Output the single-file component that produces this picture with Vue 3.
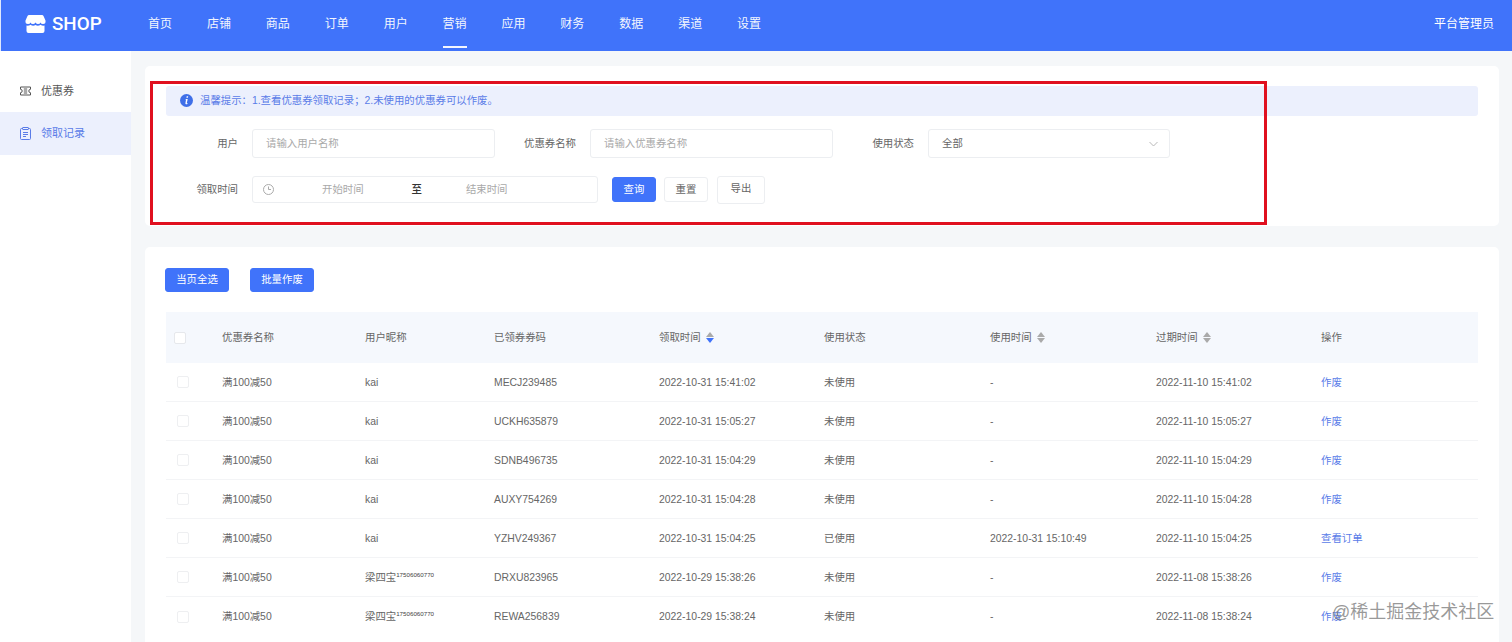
<script setup>
const navItems = ['首页', '店铺', '商品', '订单', '用户', '营销', '应用', '财务', '数据', '渠道', '设置']

const phone = '17506060770'
const rows = [
  { code: 'MECJ239485', got: '2022-10-31 15:41:02', state: '未使用', used: '-', exp: '2022-11-10 15:41:02', op: '作废', user: 'kai' },
  { code: 'UCKH635879', got: '2022-10-31 15:05:27', state: '未使用', used: '-', exp: '2022-11-10 15:05:27', op: '作废', user: 'kai' },
  { code: 'SDNB496735', got: '2022-10-31 15:04:29', state: '未使用', used: '-', exp: '2022-11-10 15:04:29', op: '作废', user: 'kai' },
  { code: 'AUXY754269', got: '2022-10-31 15:04:28', state: '未使用', used: '-', exp: '2022-11-10 15:04:28', op: '作废', user: 'kai' },
  { code: 'YZHV249367', got: '2022-10-31 15:04:25', state: '已使用', used: '2022-10-31 15:10:49', exp: '2022-11-10 15:04:25', op: '查看订单', user: 'kai' },
  { code: 'DRXU823965', got: '2022-10-29 15:38:26', state: '未使用', used: '-', exp: '2022-11-08 15:38:26', op: '作废', user: '梁四宝', sup: phone },
  { code: 'REWA256839', got: '2022-10-29 15:38:24', state: '未使用', used: '-', exp: '2022-11-08 15:38:24', op: '作废', user: '梁四宝', sup: phone },
]
</script>

<template>
  <div class="page">
    <header class="topbar">
      <div class="brand">
        <svg class="brand-icon" width="21" height="18" viewBox="0 0 21 18">
          <path fill="#fff" d="M4 0H17Q18 0 18.500 1L20.500 5.500Q21 9 18 9Q16 9 15.500 7.500Q15 9 13 9Q11.500 9 10.500 7.500Q9.500 9 8 9Q6 9 5.500 7.500Q5 9 3 9Q0 9 .5 5.500L2.500 1Q3 0 4 0Z"/>
          <path fill="#fff" d="M1.500 10.500Q3.500 11 5.500 9.800Q8 11.500 10.500 10Q13 11.500 15.500 9.800Q17.500 11 19.500 10.500V16Q19.500 18 17.500 18H3.500Q1.500 18 1.500 16Z"/>
        </svg>
        <span class="brand-name">SHOP</span>
      </div>
      <nav class="nav">
        <a v-for="item in navItems" :key="item" class="nav-item" :class="{ active: item === '营销' }">{{ item }}</a>
      </nav>
      <div class="account">平台管理员</div>
    </header>

    <div class="body">
      <aside class="sidebar">
        <div class="side-item">
          <svg width="11" height="10" viewBox="0 0 11 10" fill="none" stroke="#555" stroke-width="1">
            <path d="M.5 1h10v2.300a1.700 1.700 0 0 0 0 3.400V9H.5V6.700a1.700 1.700 0 0 0 0-3.400z"/>
            <path d="M3.800 3h3.400M3.800 5h3.400M3.800 7h3.400"/>
          </svg>
          <span>优惠券</span>
        </div>
        <div class="side-item current">
          <svg width="11" height="13" viewBox="0 0 11 13" fill="none" stroke="#5a7ce8" stroke-width="1">
            <rect x=".5" y="1.500" width="10" height="11" rx="1"/>
            <rect x="3" y=".5" width="5" height="2" fill="#ecf0fd"/>
            <path d="M3 5.500h5M3 7.500h5M3 9.500h3"/>
          </svg>
          <span>领取记录</span>
        </div>
      </aside>

      <main class="main">
        <section class="card filter-card">
          <div class="alert">
            <svg class="alert-icon" width="13" height="13" viewBox="0 0 13 13">
              <circle cx="6.500" cy="6.500" r="6.500" fill="#3f6fe8"/>
              <path fill="#fff" d="M6.700 2.300h1.500l-.3 1.500H6.400zM6 5h1.700l-.9 4.100c0 .3.300.3.800 0l-.1.800c-1.200.6-2.200.3-2.100-.7l.6-3.400-.7-.1z"/>
            </svg>
            <span>温馨提示：1.查看优惠券领取记录；2.未使用的优惠券可以作废。</span>
          </div>

          <div class="form-row">
            <label class="label">用户</label>
            <div class="field placeholder">请输入用户名称</div>
            <label class="label">优惠券名称</label>
            <div class="field placeholder">请输入优惠券名称</div>
            <label class="label">使用状态</label>
            <div class="field select">
              <span>全部</span>
              <svg width="9" height="6" viewBox="0 0 9 6" fill="none" stroke="#b8b8b8" stroke-width="1">
                <path d="M.5 1l4 4 4-4"/>
              </svg>
            </div>
          </div>

          <div class="form-row second">
            <label class="label">领取时间</label>
            <div class="range">
              <svg class="clock" width="11" height="11" viewBox="0 0 11 11" fill="none" stroke="#aaa" stroke-width="1">
                <circle cx="5.500" cy="5.500" r="5"/>
                <path d="M5.500 2.500v3h2.500"/>
              </svg>
              <span class="range-start">开始时间</span>
              <span class="range-sep">至</span>
              <span class="range-end">结束时间</span>
            </div>
            <div class="btn-group">
              <button class="btn primary query">查询</button>
              <button class="btn plain reset">重置</button>
              <button class="btn plain export">导出</button>
            </div>
          </div>
        </section>

        <section class="card list-card">
          <div class="toolbar">
            <button class="btn primary batch">当页全选</button>
            <button class="btn primary batch">批量作废</button>
          </div>

          <div class="table">
            <div class="tr thead">
              <div class="td"><span class="check head-check"></span></div>
              <div class="td">优惠券名称</div>
              <div class="td">用户昵称</div>
              <div class="td">已领券券码</div>
              <div class="td">领取时间<span class="sort"><i class="up"></i><i class="down on"></i></span></div>
              <div class="td">使用状态</div>
              <div class="td">使用时间<span class="sort"><i class="up"></i><i class="down"></i></span></div>
              <div class="td">过期时间<span class="sort"><i class="up"></i><i class="down"></i></span></div>
              <div class="td">操作</div>
            </div>
            <div v-for="row in rows" :key="row.code" class="tr">
              <div class="td"><span class="check"></span></div>
              <div class="td">满100减50</div>
              <div class="td">{{ row.user }}<sup v-if="row.sup" class="phone">{{ row.sup }}</sup></div>
              <div class="td">{{ row.code }}</div>
              <div class="td">{{ row.got }}</div>
              <div class="td">{{ row.state }}</div>
              <div class="td">{{ row.used }}</div>
              <div class="td">{{ row.exp }}</div>
              <div class="td link">{{ row.op }}</div>
            </div>
          </div>
        </section>
      </main>
    </div>

    <div class="annotation"></div>
    <div class="watermark">@稀土掘金技术社区</div>
  </div>
</template>

<style>
html, body { margin: 0; height: 100%; overflow: hidden; background: #f5f7f9; }
</style>

<style scoped>
.page {
  position: relative;
  width: 1512px;
  height: 642px;
  overflow: hidden;
  background: #f5f7f9;
  color: #666;
  font: 10.400px/1.200 "Liberation Sans", "Noto Sans CJK SC", sans-serif;
}
.topbar {
  display: flex;
  align-items: center;
  height: 51px;
  padding: 0 18px 0 24px;
  box-sizing: border-box;
  border-left: 1px solid #dfe8fd;
  background: #4073fa;
  color: #fff;
}
.brand { display: flex; align-items: center; gap: 6px; width: 123px; }
.brand-icon { flex: none; margin-top: -2px; }
.brand-name { font: 500 18.800px/1 Roboto, "Liberation Sans", sans-serif; margin-top: -2px; }
.nav { display: flex; gap: 34.900px; height: 100%; }
.nav-item {
  display: flex;
  align-items: center;
  height: 100%;
  box-sizing: border-box;
  padding-bottom: 3px;
  font-size: 12px;
  opacity: .94;
}
.nav-item.active { position: relative; }
.nav-item.active::after {
  content: "";
  position: absolute;
  left: 0;
  right: 0;
  bottom: 3px;
  height: 2px;
  background: #fff;
}
.account { margin-left: auto; padding-bottom: 3px; font-size: 12px; }

.body { display: flex; height: 591px; }
.sidebar {
  flex: none;
  width: 131px;
  padding-top: 18.500px;
  box-sizing: border-box;
  background: #fff;
}
.side-item {
  display: flex;
  align-items: center;
  gap: 10px;
  height: 42.500px;
  padding: 1px 0 0 20px;
  box-sizing: border-box;
  font-size: 11px;
  color: #555;
}
.side-item.current { background: #ecf0fd; color: #5a7ce8; }

.main { flex: 1; min-width: 0; padding: 15px 13px 0 14px; }
.card { background: #fff; border-radius: 5px; }
.filter-card { height: 160px; padding: 20px 21px 0; box-sizing: border-box; margin-bottom: 21px; }
.alert {
  display: flex;
  align-items: center;
  gap: 7px;
  height: 30px;
  padding-left: 14px;
  box-sizing: border-box;
  border-radius: 3px;
  background: #ecf0fd;
  color: #5a7ce8;
}
.alert-icon { margin-top: -1px; }
.form-row {
  display: grid;
  grid-template-columns: 86px 243px 95px 243px 95px 242px;
  align-items: center;
  margin-top: 13px;
  height: 29px;
}
.form-row.second {
  grid-template-columns: 86px 346px auto;
  justify-content: start;
  margin-top: 17px;
}
.label { padding: 1px 14px 0 0; text-align: right; color: #666; }
.field {
  display: flex;
  align-items: center;
  height: 29px;
  padding: 1px 13px 0;
  box-sizing: border-box;
  border: 1px solid #eceef1;
  border-radius: 3px;
  background: #fff;
}
.placeholder { color: #a9a9a9; }
.select { justify-content: space-between; padding-right: 11px; color: #666; }
.range {
  display: flex;
  align-items: center;
  height: 27px;
  padding: 1px 0 0 10px;
  box-sizing: border-box;
  border: 1px solid #eceef1;
  border-radius: 3px;
  color: #a9a9a9;
}
.clock { margin-top: -2px; }
.range-start { margin-left: 48px; }
.range-sep { margin-left: 48px; color: #333; font-weight: 500; }
.range-end { margin-left: 44px; }
.btn-group { display: flex; align-items: center; margin-left: 14px; }
.btn {
  padding: 0;
  box-sizing: border-box;
  border-radius: 3px;
  font: inherit;
  cursor: pointer;
}
.primary { border: 1px solid #4073fa; background: #4073fa; color: #fff; }
.plain { border: 1px solid #eceef1; background: #fff; color: #666; }
.query { width: 44px; height: 25px; padding-top: 1px; }
.reset { width: 44px; height: 25px; margin-left: 8px; padding-top: 1px; }
.export { width: 48px; height: 28px; margin-left: 9px; }

.list-card { height: 420px; padding: 21px 21px 0 20px; box-sizing: border-box; }
.toolbar { display: flex; gap: 21px; }
.batch { width: 64px; height: 24px; }
.table { margin: 20px 0 0 1px; }
.tr {
  display: grid;
  grid-template-columns: 56px 143px 129px 165px 165px 166px 166px 165px 1fr;
  align-items: center;
  height: 39px;
  box-sizing: border-box;
  border-bottom: 1px solid #f3f4f6;
}
.tr:last-child { border-bottom: 0; }
.thead { height: 51px; background: #f5f8fd; border-bottom: 0; }
.td { display: flex; align-items: center; padding-top: 2px; white-space: nowrap; }
.check {
  display: block;
  width: 12px;
  height: 12px;
  margin: -2px 0 0 11px;
  box-sizing: border-box;
  border: 1px solid #eeeff1;
  border-radius: 2px;
  background: #fff;
}
.head-check { margin-left: 8px; border-color: #e6e8ec; }
.link { color: #5a7ce8; }
.phone {
  align-self: flex-start;
  margin: 0;
  font-size: 6.200px;
  line-height: 1;
  color: #444;
}
.sort {
  display: inline-flex;
  flex-direction: column;
  gap: 1px;
  margin: -2px 0 0 5px;
}
.sort i {
  display: block;
  width: 0;
  height: 0;
  border-left: 4.500px solid transparent;
  border-right: 4.500px solid transparent;
}
.sort .up { border-bottom: 5px solid #aaa; }
.sort .down { border-top: 5px solid #aaa; }
.sort .down.on { border-top-color: #4073fa; }

.annotation {
  position: absolute;
  left: 150px;
  top: 81px;
  width: 1117px;
  height: 144px;
  box-sizing: border-box;
  border: 3px solid #e0101f;
  pointer-events: none;
}
.watermark {
  position: absolute;
  left: 1332px;
  top: 601px;
  font-size: 18px;
  line-height: 22px;
  color: rgba(120, 120, 120, .75);
  white-space: nowrap;
  pointer-events: none;
}
</style>
